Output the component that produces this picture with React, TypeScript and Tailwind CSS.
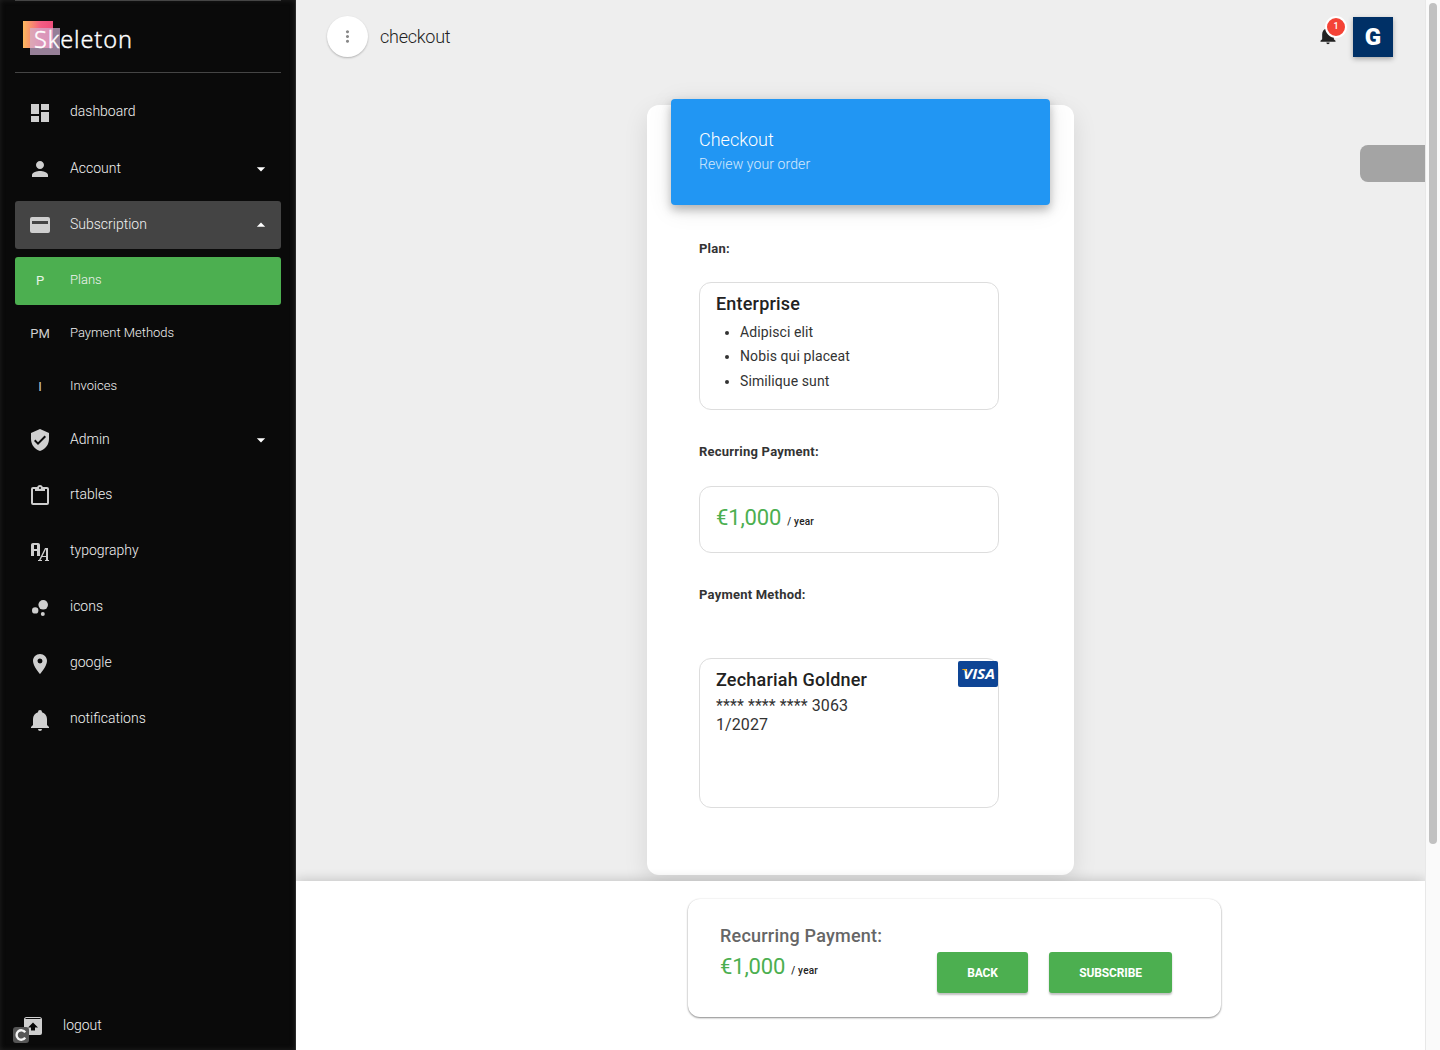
import type { ReactNode } from "react";
import { MdArrowDropDown, MdArrowDropUp, MdBubbleChart, MdDashboard, MdMoreVert, MdPerson, MdPlace, MdVerifiedUser } from "react-icons/md";

const BELL =
  "M21,19V20H3V19L5,17V11C5,7.9 7.03,5.17 10,4.29C10,4.19 10,4.1 10,4A2,2 0 0,1 12,2A2,2 0 0,1 14,4C14,4.1 14,4.19 14,4.29C16.97,5.17 19,7.9 19,11V17L21,19M14,21A2,2 0 0,1 12,23A2,2 0 0,1 10,21";
const CLIPBOARD =
  "M19,3H14.82C14.4,1.84 13.3,1 12,1C10.7,1 9.6,1.84 9.18,3H5A2,2 0 0,0 3,5V19A2,2 0 0,0 5,21H19A2,2 0 0,0 21,19V5A2,2 0 0,0 19,3M12,3A1,1 0 0,1 13,4A1,1 0 0,1 12,5A1,1 0 0,1 11,4A1,1 0 0,1 12,3M7,7H17V5H19V19H5V5H7V7Z";
const FONT_ICON =
  "M17,8H20V20H21V21H17V20H18V17H14L12.5,20H14V21H10V20H11L17,8M18,9L14.5,16H18V9M5,3H10C11.11,3 12,3.89 12,5V16H9V11H6V16H3V5C3,3.89 3.89,3 5,3M6,5V9H9V5H6Z";
const CARD = "M4 4h16a2 2 0 0 1 2 2v12a2 2 0 0 1-2 2H4a2 2 0 0 1-2-2V6a2 2 0 0 1 2-2zM4 8v3h16V8z";
const UNARCHIVE =
  "M5.5 3h13a2.5 2.5 0 0 1 2.5 2.5v13.500a2 2 0 0 1-2 2H5a2 2 0 0 1-2-2V5.500A2.500 2.500 0 0 1 5.500 3zM4.500 4v1h15v-1zM12 8.500l-5 5h3v3h4v-3h3z";

function Icon({ d, size = 24 }: { d: string; size?: number }) {
  return (
    <svg width={size} height={size} viewBox="0 0 24 24" fill="currentColor" fillRule="evenodd">
      <path d={d} />
    </svg>
  );
}

type ItemProps = { icon: ReactNode; label: string; className?: string; text?: string; arrow?: "up" | "down" };

function Item({ icon, label, className = "mt-2", text = "text-[14px] pb-[4px]", arrow }: ItemProps) {
  return (
    <a className={`flex h-12 shrink-0 items-center rounded-[3px] pl-[10px] pr-[10px] ${className}`}>
      <span className="flex w-[30px] justify-center text-[13px] leading-6 text-[#cfcfcf]">{icon}</span>
      <span className={`ml-[15px] flex-1 font-light leading-6 text-[#f2f2f2] ${text}`}>{label}</span>
      {arrow === "down" && <MdArrowDropDown size={20} className="text-white" />}
      {arrow === "up" && <MdArrowDropUp size={20} className="mb-px text-white" />}
    </a>
  );
}

const GROUP_TEXT = "text-[14px] pb-[3px]";
const SUB_TEXT = "text-[13px] pb-[2px]";

function Sidebar() {
  return (
    <aside className="flex h-full w-[296px] shrink-0 flex-col border-r border-[#2a2a2a] bg-[#0a0a0a] px-[15px] shadow-[inset_0_0_5px_#222]">
      <div className="flex h-[73px] w-[266px] shrink-0 border-y border-[#454545] pl-2 pt-5">
        <svg width="130" height="40" viewBox="0 0 130 40">
          <defs>
            <linearGradient id="logo">
              <stop offset="0" stopColor="#fdb95d" />
              <stop offset="0.6" stopColor="#f35c84" />
              <stop offset="1" stopColor="#ee4e7b" />
            </linearGradient>
          </defs>
          <rect width="30" height="27" fill="url(#logo)" />
          <rect x="7" y="7" width="30" height="27" fill="#d2b1d3" fillOpacity="0.7" />
          <text x="11" y="27" fill="#fff" stroke="#fff" strokeWidth="0.35" fontFamily="Noto Sans, sans-serif" fontSize="23.5" fontWeight="300" textLength="98">
            Skeleton
          </text>
        </svg>
      </div>
      <nav className="flex w-[266px] flex-col pt-4">
        <Item className="" icon={<MdDashboard size={24} />} label="dashboard" />
        <Item icon={<MdPerson size={24} />} label="Account" text={GROUP_TEXT} arrow="down" />
        <Item icon={<Icon d={CARD} />} label="Subscription" text={GROUP_TEXT} arrow="up" className="mt-2 bg-[#444]" />
        <Item icon={<span className="text-[#e6f5e6]">P</span>} label="Plans" text={SUB_TEXT} className="mt-2 bg-[#4caf50]" />
        <Item icon="PM" label="Payment Methods" text={SUB_TEXT} className="mt-[5px]" />
        <Item icon="I" label="Invoices" text={SUB_TEXT} className="mt-[5px]" />
        <Item icon={<MdVerifiedUser size={24} />} label="Admin" text={GROUP_TEXT} arrow="down" className="mt-[5px]" />
        <Item icon={<Icon d={CLIPBOARD} />} label="rtables" />
        <Item icon={<Icon d={FONT_ICON} />} label="typography" />
        <Item icon={<MdBubbleChart size={24} />} label="icons" />
        <Item icon={<MdPlace size={24} />} label="google" />
        <Item icon={<Icon d={BELL} />} label="notifications" />
      </nav>
      <div className="relative mb-3 mt-auto flex h-6 items-center pl-[6px] text-[#cfcfcf]">
        <Icon d={UNARCHIVE} />
        <span className="ml-[18px] pb-[2px] text-[14px] font-light leading-5 text-[#f2f2f2]">logout</span>
        <span className="absolute -left-[2px] top-[13px] flex size-4 items-center justify-center rounded-[3px] bg-[#555]">
          <svg width="12" height="12" viewBox="0 0 12 12" fill="none" stroke="#f4f4f4" strokeWidth="2.4">
            <path d="M10.2 3.4A4.7 4.7 0 1 0 10.2 8.6" />
          </svg>
        </span>
      </div>
    </aside>
  );
}

function Price() {
  return (
    <div className="leading-[33px] text-[#4caf50]">
      <span className="text-[22px] tracking-[-0.15px]">€1,000</span>
      <span className="ml-[6px] text-[10px] font-medium tracking-[0.22px] text-[#222]">/ year</span>
    </div>
  );
}

function Label({ children, className }: { children: ReactNode; className: string }) {
  return <h5 className={`text-[13px] font-bold leading-5 tracking-[0.23px] text-[#333] ${className}`}>{children}</h5>;
}

function Visa() {
  return (
    <svg className="absolute -right-px top-[2px]" width="41" height="26" viewBox="0 0 41 26">
      <rect width="40" height="26" rx="2" fill="#0e4595" />
      <text x="5" y="18" fill="#fff" fontFamily="Open Sans, sans-serif" fontSize="14" fontWeight="700" fontStyle="italic" textLength="32" lengthAdjust="spacingAndGlyphs">
        VISA
      </text>
      <path d="M4 8h4l1.800 4.200C8.600 10.200 6.800 8.800 4 8.500z" fill="#f2ae14" />
    </svg>
  );
}

function Checkout() {
  return (
    <section className="mx-auto flex h-[770px] w-[427px] flex-col rounded-[12px] bg-white px-6 shadow-[0_8px_24px_rgba(0,0,0,0.1)]">
      <header className="-mt-[6px] flex h-[106px] w-[379px] shrink-0 flex-col rounded-[4px] bg-[#2196f3] pl-7 pt-[30px] font-light shadow-[0_5px_10px_rgba(0,0,0,0.25),0_4px_25px_rgba(0,0,0,0.1)]">
        <h4 className="text-[18px] leading-[22px] text-white">Checkout</h4>
        <p className="mt-[3px] text-[14px] leading-[21px] tracking-[0.1px] text-white/80">Review your order</p>
      </header>
      <div className="flex w-[328px] flex-col pl-7">
        <Label className="mt-[34px]">Plan:</Label>
        <div className="mt-[23px] h-[128px] rounded-[12px] border border-[#ddd] px-4 pt-2">
          <h4 className="text-[18px] font-medium leading-[26px] tracking-[0.2px] text-[#222]">Enterprise</h4>
          <ul className="mt-[3px] list-disc pl-6 text-[14px] leading-[24.4px] tracking-[0.1px] text-[#333]">
            <li>Adipisci elit</li>
            <li>Nobis qui placeat</li>
            <li>Similique sunt</li>
          </ul>
        </div>
        <Label className="mt-8">Recurring Payment:</Label>
        <div className="mt-[24px] h-[67px] rounded-[12px] border border-[#ddd] px-4 pt-[14px]">
          <Price />
        </div>
        <Label className="mt-8">Payment Method:</Label>
        <div className="relative mt-[53px] h-[150px] rounded-[12px] border border-[#ddd] px-4 pt-2">
          <Visa />
          <h4 className="text-[18px] font-medium leading-[26px] tracking-[0.2px] text-[#222]">Zechariah Goldner</h4>
          <p className="mt-[3px] text-[16px] leading-[19px] tracking-[0.08px] text-[#333]">**** **** **** 3063</p>
          <p className="text-[16px] leading-[19px] tracking-[0.08px] text-[#333]">1/2027</p>
        </div>
      </div>
    </section>
  );
}

function Topbar() {
  return (
    <div className="flex h-[73px] shrink-0 items-center pl-[31px] pr-8">
      <button className="flex size-[41px] items-center justify-center rounded-full bg-white text-[#888] shadow-[0_1px_2px_rgba(0,0,0,0.25)]">
        <MdMoreVert size={19} />
      </button>
      <span className="ml-3 text-[18px] font-light leading-6 tracking-[-0.25px] text-[#222]">checkout</span>
      <div className="relative ml-auto mr-[15px] pb-[3px] text-[#222]">
        <Icon d={BELL} size={20} />
        <span className="absolute left-[7px] top-[-9px] flex size-[22px] items-center justify-center rounded-full border-2 border-white bg-[#f44336] text-[9px] font-medium text-white">
          1
        </span>
      </div>
      <div className="flex size-10 items-center justify-center bg-[#003066] text-[24px] font-black leading-[38px] text-white shadow-[0_2px_5px_rgba(0,0,0,0.3)]">G</div>
    </div>
  );
}

function Footer() {
  const button = "h-[41px] rounded-[3px] bg-[#4caf50] pt-px text-[12px] font-bold tracking-[-0.12px] text-white shadow-[0_2px_2px_rgba(0,0,0,0.25)]";
  return (
    <footer className="relative h-[169px] shrink-0 bg-white pl-[392px] pt-[18px] shadow-[0_-2px_10px_rgba(0,0,0,0.16)]">
      <div className="flex h-[118px] w-[533px] rounded-[12px] bg-white pl-8 shadow-[0_1px_2px_rgba(0,0,0,0.45),0_0_2px_rgba(0,0,0,0.08)]">
        <div className="w-[217px] pt-[24px]">
          <h4 className="pb-px text-[18px] font-medium leading-[26px] tracking-[0.22px] text-[#666]">Recurring Payment:</h4>
          <Price />
        </div>
        <div className="flex gap-[21px] pt-[53px]">
          <button className={`w-[91px] ${button}`}>BACK</button>
          <button className={`w-[123px] ${button}`}>SUBSCRIBE</button>
        </div>
      </div>
    </footer>
  );
}

export default function App() {
  return (
    <div className="flex h-[1050px] w-[1440px] overflow-hidden bg-[#eee] font-['Roboto',sans-serif]">
      <Sidebar />
      <main className="relative flex w-[1129px] flex-col overflow-hidden">
        <Topbar />
        <div className="flex-1 pt-8">
          <Checkout />
        </div>
        <div className="absolute right-0 top-[145px] h-[37px] w-[65px] rounded-l-[8px] bg-[#a4a4a4]" />
        <Footer />
      </main>
      <div className="flex w-[15px] justify-center border-l border-[#e8e8e8] bg-[#fafafa] pt-[3px]">
        <div className="h-[841px] w-2 rounded-full bg-[#c1c1c1]" />
      </div>
    </div>
  );
}
